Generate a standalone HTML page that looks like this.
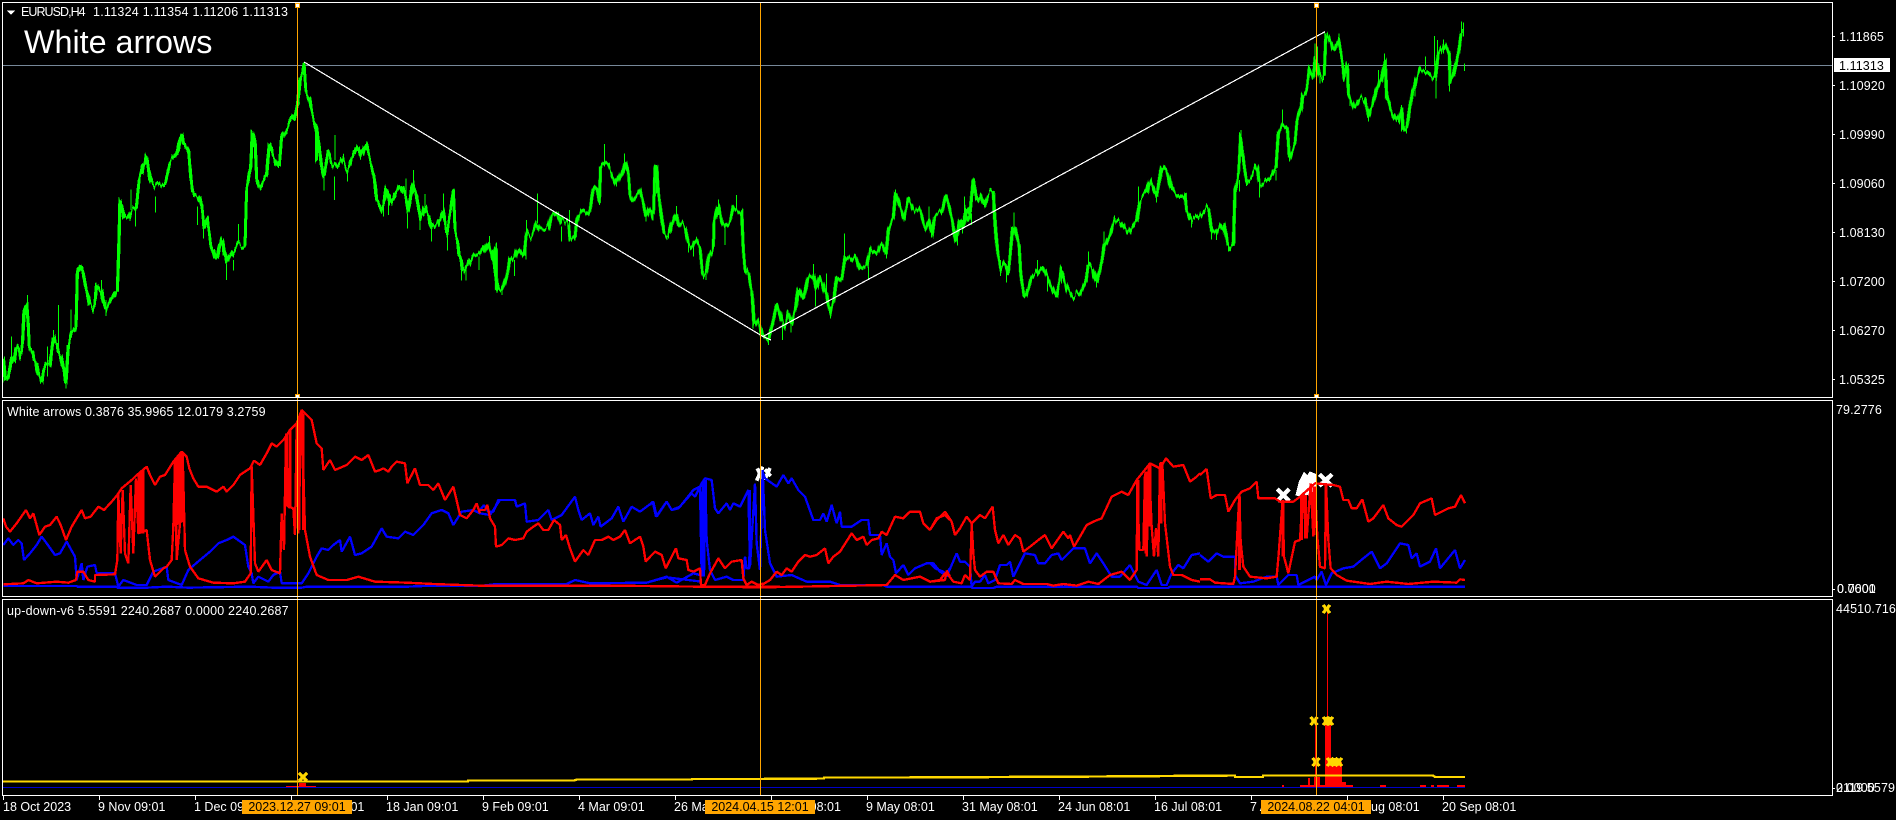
<!DOCTYPE html>
<html>
<head>
<meta charset="utf-8">
<title>EURUSD,H4</title>
<style>
html,body{margin:0;padding:0;background:#000;}
body{width:1896px;height:820px;position:relative;overflow:hidden;font-family:"Liberation Sans",sans-serif;font-size:12.5px;color:#fff;}
svg{position:absolute;left:0;top:0;}
.t{position:absolute;white-space:pre;line-height:14px;height:14px;}
.a{position:absolute;white-space:pre;line-height:14px;height:14px;left:1839px;letter-spacing:.1px;}
.big{position:absolute;left:24px;top:24px;font-size:32.3px;line-height:36px;white-space:pre;color:#fff;}
.o{position:absolute;background:#FFA500;color:#000;height:14px;line-height:14px;text-align:center;white-space:pre;}
.p{position:absolute;left:1834px;top:58px;width:56px;height:14px;background:#fff;}
</style>
</head>
<body>
<svg width="1896" height="820" viewBox="0 0 1896 820" xmlns="http://www.w3.org/2000/svg" shape-rendering="crispEdges">
<defs>
<filter id="jit" filterUnits="userSpaceOnUse" x="0" y="0" width="1896" height="820" color-interpolation-filters="sRGB">
<feTurbulence type="fractalNoise" baseFrequency="0.37 0.003" numOctaves="2" seed="7" result="m"/>
<feColorMatrix in="m" type="matrix" values="0 0 0 0 .5  0 1 0 0 0  0 0 0 0 0  0 0 0 0 1" result="map"/>
<feDisplacementMap in="SourceGraphic" in2="map" scale="15" xChannelSelector="R" yChannelSelector="G"/>
</filter>
</defs>
<!-- price line -->
<line x1="3" y1="65.5" x2="1832" y2="65.5" stroke="#778899" stroke-width="1"/>
<!-- green price -->
<g filter="url(#jit)">
<g fill="none" stroke="#00FF00" stroke-width="9.5" stroke-linejoin="bevel">
<g transform="translate(0,100) scale(.33333)">
<polyline points="10,770 16,840 25,830 35,770 42,790 48,750 55,735 62,770 68,720 72,640 80,610 84,660 88,750 95,750 105,780 118,830 125,845 135,795 150,795 160,710 172,740 178,760 188,790 197,850 205,740 213,700 228,685 232,520 245,495 258,560 268,610 282,630 290,560 305,580 315,630 340,590 352,570 357,420 360,290 372,350 385,355 395,330 408,330 418,240 428,210 440,165 450,235 462,260 480,250 495,250 510,190 530,170 545,100 552,130 566,150 572,230 580,280 595,285 605,310 612,380 622,350 632,430 650,480 665,410 680,490 690,470 715,430 735,440 740,270 752,210 757,100 765,120 770,240 778,265 800,225 808,130 825,180 838,200 845,110 860,90 870,65 888,40 895,0"/>
<polyline points="950,80 965,200 972,235 985,160 995,195 1005,200 1015,190 1025,175 1040,210 1050,190 1062,160 1075,135 1085,170 1098,135 1110,180 1122,220 1130,290 1148,330 1160,260 1172,310 1190,270 1200,255 1215,285 1225,340 1238,250 1250,290 1262,360 1275,320 1285,345 1295,385 1315,370 1330,330 1340,400 1360,280 1365,390 1378,460 1390,515 1405,490 1420,460 1440,465 1465,430 1480,470 1490,550 1497,570"/>
</g>
<g transform="translate(0,0) scale(.33333)">
<polyline points="885,345 893,300 900,240 912,195 918,280 930,300 935,330 945,370 950,380 950,480"/>
</g>
<g transform="translate(480,100) scale(.33333)">
<polyline points="0,455 10,460 25,425 38,470 48,440 50,570 65,570 80,530 90,470 100,480 115,445 132,470 140,400 155,410 172,370 178,385 205,385 215,340 230,330 245,370 265,365 270,410 285,410 290,355 305,330 328,345 340,270 350,260 358,300 362,190 385,200 410,250 430,205 435,180 445,210 450,280 460,295 480,270 490,310 498,350 510,320 520,350 525,210 530,200 535,270 540,320 552,400 565,410 580,360 590,340 595,370 615,385 625,430 635,440 645,420 660,445 668,520 678,525 688,465 700,450 702,370 716,320 725,370 735,380 750,370 760,325 785,335 790,450 795,510 805,520 815,570 823,680 835,660 842,690 850,710 865,720 878,670 890,610 905,660 915,680 925,640 935,670 948,620 955,565 970,600 985,530 1000,520 1010,570 1020,530 1040,590 1050,640 1062,600 1070,530 1085,540 1095,470 1110,480 1125,465 1140,510 1160,500 1172,450 1190,460 1205,430 1218,460 1225,385 1240,350 1247,275 1258,310 1272,350 1285,295 1300,325 1320,335 1335,385 1345,360 1355,405 1365,340 1385,345 1398,290 1415,350 1428,425 1440,360 1452,370 1460,320 1470,340 1480,240 1490,300 1500,290"/>
</g>
<g transform="translate(960,0) scale(.33333)">
<polyline points="0,670 10,685 15,640 28,660 40,540 48,590 60,590 70,620 85,580 100,570 103,640 108,710 113,760 122,810 135,790 145,820 158,680 165,690 177,740 182,820 192,890 200,880 215,830 230,820 245,800 262,830 275,860 290,890 305,810 320,860 340,890 360,880 378,840 385,790 395,800 410,850 425,790 432,740 450,705 465,660 480,665 505,700 530,660 540,600 560,580 570,540 590,590 605,495 620,510 635,570 650,590 675,580 680,630 695,660 715,650 745,620 755,690 770,700 790,670 805,745 820,730 825,570 835,530 842,410 850,470 860,540 875,530 892,500 898,550 930,530 948,500 955,400 968,375 982,385 988,470 1005,430 1012,360 1023,330 1028,285 1040,270 1048,205 1060,230 1065,170 1070,190 1080,230 1092,220 1098,100 1110,120 1120,150 1135,120 1148,190 1152,235 1162,190 1165,280 1185,320 1200,295 1215,300 1225,350 1240,310 1250,270 1265,235 1275,180 1280,290 1295,340 1315,370 1325,330 1330,395 1340,390 1355,290 1365,250 1380,210 1400,220 1425,240 1435,160 1455,130 1468,160 1470,250 1480,230 1495,160 1505,95"/>
</g>
</g>
</g>
<!-- thin spikes -->
<g fill="none" stroke="#00FF00" stroke-width="3.2">
<path transform="translate(0,100) scale(.33333)" d="M35 710V790M82 585V640M175 615V740M160 690V730M142 740V830M213 628V690M198 800V865M305 540V600M318 600V648M406 330V380M393 268V330M466 290V338M592 320V375M610 360V415M680 490V540M716 372V430M700 480V512M1005 105V180M1003 230V300M972 230V272M1043 210V245M1150 320V350M1165 300V345M1218 235V290M1222 340V385M1240 210V280M1260 360V390M1275 282V340M1295 380V425M1330 280V360M1343 400V452M1362 265V300M1385 510V542M1398 510V542M1437 470V510M1468 408V450M1490 428V500"/>
<path transform="translate(480,100) scale(.33333)" d="M172 280V370M140 360V400M245 380V425M268 330V425M285 385V422M358 290V315M374 132V200M410 240V260M433 160V200M104 480V528M138 440V478M48 430V570M66 560V585M498 340V365M519 310V362M530 195V280M565 395V415M590 318V360M735 380V435M716 298V345M770 285V330M640 440V470M625 430V458M678 500V540M865 700V735M908 670V720M933 660V698M1052 620V655M1007 550V620M1000 492V540M1040 520V590M1093 400V470M1165 500V540M1220 430V475M1247 268V290M1272 340V365M1355 390V412M1347 320V370M1432 400V437M1453 290V340M1481 235V280"/>
<path transform="translate(960,0) scale(.33333)" d="M8 660V700M35 640V675M13 590V640M162 637V690M122 780V828M140 810V848M232 780V830M263 820V875M305 800V850M385 755V810M410 830V862M432 695V750M535 560V620M590 580V608M695 650V682M755 690V718M770 695V720M805 730V755M825 680V730M838 540V575M843 390V470M860 520V558M898 540V593M948 510V542M968 328V375M988 440V485M1065 130V180M1072 140V200M1080 220V250M1090 200V240M1097 100V195M1137 100V140M1170 290V318M1225 330V365M1255 210V260M1274 160V230M1280 260V300M1325 315V395M1340 370V400M1365 240V290M1397 170V210M1423 108V200M1428 230V296M1433 120V160M1450 118V160M1468 210V275M1472 175V210M1505 65V100M1510 68V110M1513 190V213"/>
</g>
<!-- zigzag trend -->
<polyline points="304,62 763,336.5 771,340 763,336.5 1325,31.7" fill="none" stroke="#fff" stroke-width="1.2"/>

<!-- white X arrows -->
<g transform="translate(1200,440) scale(.33333)" stroke="#fff" stroke-width="13" fill="none">
<path d="M232 147L268 183M268 147L232 183"/>
<path d="M288 165L298 125L312 98L322 108L330 96L350 104L346 140L328 165L310 162L300 168Z" fill="#fff" stroke-width="3"/>
<path d="M358 103L396 138M396 103L358 138"/>
</g>
<g transform="translate(650,440) scale(.33333)" stroke="#fff" stroke-width="11" fill="none">
<path d="M320 122L338 80M322 85L340 122M345 118L360 84M345 88L362 108"/>
</g>

<!-- indicator panel lines -->
<g fill="none" stroke="#0000FF" stroke-width="7" stroke-linejoin="bevel">
<g transform="translate(0,390) scale(.33333)">
<polyline points="10,465 25,445 40,465 55,450 65,460 72,510 90,490 110,465 125,440 140,460 165,495 180,490 200,455 225,500 230,570 245,520 250,570 262,530 285,525 290,550 345,550 355,590 370,570 410,585 440,585 460,545 500,530 505,570 545,585 565,540 600,510 630,485 655,460 680,450 700,440 735,465 745,530 755,550 760,580 775,560 805,575 820,555 840,545 845,580 890,580 905,580 925,550 950,500 965,475 985,480 1000,465 1020,450 1025,485 1050,440 1065,495 1085,490 1115,470 1145,415 1160,440 1195,445 1215,425 1240,435 1270,405 1295,370 1325,360 1345,370 1360,405 1385,365 1420,360 1440,370 1470,375 1500,330"/>
<polyline points="10,588 230,588 232,590 350,590 352,593 440,593 500,590 565,593 750,590 820,593 905,593 920,590 1220,590 1300,587 1440,587"/>
</g>
<g transform="translate(480,440) scale(.33333)">
<polyline points="0,210 12,195 25,215 40,215 55,180 105,180 110,200 135,190 140,245 175,240 205,210 215,240 245,225 285,170 295,210 305,240 330,220 340,255 355,230 362,260 395,235 415,200 430,245 455,200 480,215 520,185 530,230 560,185 575,210 600,200 640,150 660,140 665,410 668,125 672,410 676,120 680,300 690,390 705,420 740,410 760,420 790,420 795,350 800,385 808,385 810,150"/>
<polyline points="0,438 50,432 260,432 285,420 330,430 500,428 560,410 590,428 640,400 660,405"/>
</g>
<g stroke-width="11" transform="translate(480,440) scale(.33333)"><path d="M670 125V400M676 120V300"/></g>
<g transform="translate(650,440) scale(.33333)">
<polyline points="0,195 8,185 18,230 50,185 65,210 85,205 125,160 135,170 155,130 165,115 185,120 195,205 205,220 230,190 240,210 250,190 270,200 295,150 300,380 315,130 320,310 330,390 338,90 345,270 360,370 380,410 425,405 470,425 540,425 570,435 700,435 710,440 900,440"/>
<polyline points="340,100 345,115 380,140 400,105 415,130 425,115 445,150 465,170 490,240 510,240 520,220 530,245 545,195 560,250 570,215 575,260 605,260 635,240 655,240 660,285 690,285 695,345 710,310 720,350 730,360 738,400 760,375 775,405 795,385 830,370 850,370 870,395 885,405 900,385"/>
<polyline points="155,425 50,412 0,425"/>
</g>
<g transform="translate(930,440) scale(.33333)">
<polyline points="0,370 15,385 40,395 50,410 80,340 90,365 105,365 120,380 125,440 135,425 150,425 165,405 175,430 195,420 210,375 230,375 240,365 250,410 285,340 315,345 325,370 345,370 365,345 385,340 395,360 415,340 430,325 465,325 480,370 500,340 520,370 545,410 570,410 600,375 625,425 650,435 680,390 695,435 710,435 725,400 745,375 760,385 785,345 810,340"/>
<polyline points="0,440 125,440 125,444 190,444 200,440 620,440 625,444 715,444 720,440 810,440"/>
</g>
<g transform="translate(1200,440) scale(.33333)">
<polyline points="0,345 25,365 50,340 70,350 105,350 105,405 120,430 160,425 200,410 230,410 235,435 250,420 265,405 290,405 295,435 345,410 350,420 365,395 378,435 395,400 430,385 460,380 490,355 515,335 540,385 560,370 600,310 625,315 635,355 650,340 660,380 690,365 708,325 720,385 765,330 780,385 795,360"/>
<polyline points="0,440 795,440"/>
</g>
</g>
<g fill="none" stroke="#FF0000" stroke-width="7" stroke-linejoin="bevel">
<g transform="translate(0,390) scale(.33333)">
<polyline points="10,385 18,410 30,425 50,400 78,360 90,385 100,370 118,435 135,410 150,405 170,380 182,405 198,450 215,410 230,385 245,360 255,385 272,380 295,350 312,360 335,335 352,315 365,295 395,270 405,260 440,230 450,255 465,285 480,260 495,255 520,215 545,185 560,200 568,235 580,265 595,290 620,290 650,305 670,290 680,305 700,285 720,255 750,235 762,212 780,225 800,190 815,160 830,170 850,150 870,120 890,100 905,60 920,75 935,90 950,160 965,175 970,240 990,210 1005,240 1040,225 1065,200 1085,210 1105,195 1125,245 1140,240 1150,235 1165,245 1175,230 1190,215 1215,220 1222,280 1245,235 1260,285 1285,285 1300,300 1315,280 1335,330 1360,290 1372,340 1380,375 1400,385 1420,360 1430,340 1440,370"/>
<polyline points="10,583 70,580 85,570 110,580 170,575 205,578 228,570 232,545 250,545 265,570 285,575 285,555 345,553 352,510 355,310 362,490 368,300 375,490 385,520 392,285 400,490 408,265 415,430 440,420 450,510 465,560 490,535 500,530 515,510 520,410 525,210 530,510 540,400 548,190 555,480 570,530 595,565 640,578 700,580 735,575 752,550 755,230 765,520 775,545 800,510 815,540 840,550 845,370 852,480 858,130 865,350 880,355 885,435 890,100 895,430 905,60 915,420 930,500 950,555 985,570 1040,570 1075,560 1125,575 1220,578 1300,582 1440,587"/>
<path d="M413 255L432 238V430H413ZM522 212L548 188V395L522 410Z" fill="#FF0000" stroke-width="2"/>
<path d="M860 130V350M870 118V355M898 80V420M910 70V420" stroke-width="8"/>
</g>
<g transform="translate(480,440) scale(.33333)">
<polyline points="0,210 15,210 22,195 30,235 45,260 48,320 65,315 85,295 105,300 130,295 140,275 160,260 175,250 190,270 205,270 222,240 240,255 245,300 258,285 270,325 285,365 310,330 325,345 345,300 365,300 385,290 400,300 420,290 435,270 450,310 465,300 480,290 490,320 497,365 515,345 525,335 545,345 557,385 575,350 588,325 595,355 620,360 625,390 640,395 660,385 663,435 675,435 690,400 715,355 735,385 755,365 785,360 790,415 800,435 815,425 835,435 850,430"/>
<polyline points="0,437 400,437 660,440 900,440"/>
</g>
<g transform="translate(650,440) scale(.33333)">
<polyline points="335,435 360,420 380,395 395,405 410,385 425,395 445,365 465,345 480,350 500,345 525,325 535,370 550,350 570,335 605,280 620,300 640,290 650,315 665,300 685,295 695,275 710,285 735,230 760,235 780,215 810,215 820,250 840,270 860,235 885,225 900,240"/>
<polyline points="170,440 340,442 660,436 710,435 735,405 760,420 810,410 840,425 885,420 890,392 900,410"/>
</g>
<g transform="translate(930,440) scale(.33333)">
<polyline points="0,270 20,240 45,215 65,245 75,285 90,265 110,230 125,250 150,225 165,235 188,200 195,270 205,310 220,285 235,315 255,285 270,295 280,335 300,320 325,300 345,285 365,325 400,275 415,295 420,285 432,320 450,290 470,255 490,245 515,235 545,170 575,155 595,165 620,120 660,70 690,85 708,55 730,80 760,75 780,125 800,110 810,100"/>
<polyline points="0,425 30,420 45,400 55,405 70,425 95,430 105,405 120,420 125,250 130,340 135,390 150,410 170,395 190,395 205,430 245,432 255,420 280,432 350,432 370,437 400,432 440,437 475,425 505,432 540,405 575,395 600,420 620,390 622,120 628,330 640,330 645,100 650,350 657,70 665,260 672,350 678,265 685,350 690,70 697,70 705,250 720,380 730,405 755,405 785,420 810,425"/>
<path d="M625 120V330M648 95V340M660 70V260M694 70V250" stroke-width="8"/>
</g>
<g transform="translate(1200,440) scale(.33333)">
<polyline points="0,105 20,87 32,175 50,165 75,165 85,215 105,180 125,155 150,145 170,125 175,175 225,175 240,185 280,185 300,170 345,130 400,135 420,140 430,180 445,180 455,205 470,205 487,178 505,245 520,235 550,195 565,235 590,255 605,260 640,225 660,190 695,175 705,225 745,205 765,200 783,165 795,190"/>
<polyline points="0,418 30,418 45,428 100,432 105,410 118,165 122,305 130,380 150,410 200,415 230,410 235,355 248,180 252,350 265,400 285,305 300,300 308,160 320,295 332,130 340,290 345,140 352,290 360,380 375,385 378,130 385,300 392,385 410,405 440,422 510,432 560,425 625,432 700,425 770,428 780,418 795,420"/>
<path d="M119 170V390M249 185V350M305 165V300M316 165V295M342 140V285M378 135V290" stroke-width="9"/>
</g>
</g>

<!-- third panel -->
<g fill="none" stroke="#FF0000">
<path d="M1327.5 609V725M1315.5 721V787" stroke-width="1"/>
</g>
<g fill="#FF0000">
<rect x="1325" y="725" width="6" height="62"/>
<rect x="1325" y="762" width="17" height="23"/>
<rect x="1300" y="785" width="53" height="2"/>
<rect x="1308" y="778" width="2" height="9"/>
<rect x="1314" y="777" width="6" height="10"/>
<rect x="1342" y="782" width="4" height="5"/>
<rect x="1282" y="785" width="2" height="2"/>
<rect x="1380" y="785" width="6" height="2"/>
<rect x="1420" y="785" width="6" height="2"/>
<rect x="1431" y="785" width="3" height="2"/>
<rect x="1437" y="785" width="12" height="2"/>
<rect x="1457" y="785" width="8" height="2"/>
<rect x="299" y="783" width="7" height="4"/>
<rect x="286" y="786" width="30" height="1"/>
</g>
<line x1="3" y1="787.5" x2="1465" y2="787.5" stroke="#0000C8" stroke-width="1"/>
<polyline points="3,781.5 468,781.5 468,780.5 574,780.5 577,779.5 692,779.5 692,779 758,779 824,778.5 824,777.5 900,777.5 1100,776.5 1235,775.5 1235,777 1263,777 1263,775.5 1433,775.5 1435,777 1465,777" fill="none" stroke="#FFD700" stroke-width="2.4"/>
<g stroke="#FFD700" stroke-width="3.2" fill="none">
<path d="M299 773L307 781M307 773L299 781"/>
<path d="M1323 605L1330 613M1330 605L1323 613"/>
<path d="M1310.5 717L1317.5 725M1317.5 717L1310.5 725"/>
<path d="M1323 717L1330 725M1330 717L1323 725M1326 717L1333 725M1333 717L1326 725"/>
<path d="M1312.5 758L1319.5 766M1319.5 758L1312.5 766"/>
<path d="M1327 758L1334 766M1334 758L1327 766M1331 758L1338 766M1338 758L1331 766M1335 758L1342 766M1342 758L1335 766"/>
</g>

<!-- vertical orange lines -->
<g stroke="#FFA500" stroke-width="1">
<line x1="297.5" y1="3" x2="297.5" y2="796"/>
<line x1="760.5" y1="3" x2="760.5" y2="796"/>
<line x1="1316.5" y1="3" x2="1316.5" y2="796"/>
</g>
<g fill="#fff" stroke="#FFA500" stroke-width="1">
<rect x="295.5" y="3.5" width="4" height="4"/>
<rect x="295.5" y="394.5" width="4" height="3"/>
<rect x="1314.5" y="3.5" width="4" height="4"/>
<rect x="1314.5" y="394.5" width="4" height="3"/>
</g>

<!-- frames -->
<g fill="none" stroke="#fff" stroke-width="1">
<rect x="2.5" y="2.5" width="1830" height="395"/>
<rect x="2.5" y="400.5" width="1830" height="196"/>
<rect x="2.5" y="599.5" width="1830" height="196"/>
</g>
<path d="M7 10.5H15L11 15Z" fill="#fff"/>
<!-- ticks -->
<g stroke="#fff" stroke-width="1">
<path d="M1833 36.5H1835M1833 85.5H1835M1833 134.5H1835M1833 183.5H1835M1833 232.5H1835M1833 281.5H1835M1833 330.5H1835M1833 379.5H1835M1833 589.5H1835M1833 788.5H1835"/>
<path d="M3.5 796V800M99.5 796V800M195.5 796V800M291.5 796V800M387.5 796V800M483.5 796V800M579.5 796V800M675.5 796V800M771.5 796V800M867.5 796V800M963.5 796V800M1059.5 796V800M1155.5 796V800M1251.5 796V800M1347.5 796V800M1443.5 796V800"/>
</g>
</svg>

<div class="t" style="left:21px;top:5px;letter-spacing:-.95px;">EURUSD,H4</div>
<div class="t" style="left:93px;top:5px;letter-spacing:.25px;">1.11324 1.11354 1.11206 1.11313</div>
<div class="big">White arrows</div>
<div class="t" style="left:7px;top:405px;letter-spacing:.12px;">White arrows 0.3876 35.9965 12.0179 3.2759</div>
<div class="t" style="left:7px;top:604px;letter-spacing:.18px;">up-down-v6 5.5591 2240.2687 0.0000 2240.2687</div>

<div class="a" style="top:30px;">1.11865</div>
<div class="a" style="top:79px;">1.10920</div>
<div class="a" style="top:128px;">1.09990</div>
<div class="a" style="top:177px;">1.09060</div>
<div class="a" style="top:226px;">1.08130</div>
<div class="a" style="top:275px;">1.07200</div>
<div class="a" style="top:324px;">1.06270</div>
<div class="a" style="top:373px;">1.05325</div>
<div class="p"></div>
<div class="a" style="top:59px;color:#000;">1.11313</div>
<div class="a" style="top:403px;left:1836px;">79.2776</div>
<div class="a" style="top:582px;left:1837px;">0.7601</div>
<div class="a" style="top:582px;left:1837px;">0.0000</div>
<div class="a" style="top:602px;left:1836px;">44510.7164</div>
<div class="a" style="top:781px;left:1836px;">0.0000</div>
<div class="a" style="top:781px;left:1836px;">2119.5579</div>

<div class="t" style="left:3px;top:800px;">18 Oct 2023</div>
<div class="t" style="left:98px;top:800px;">9 Nov 09:01</div>
<div class="t" style="left:194px;top:800px;">1 Dec 09:01</div>
<div class="t" style="left:290px;top:800px;">22 Dec 09:01</div>
<div class="t" style="left:386px;top:800px;">18 Jan 09:01</div>
<div class="t" style="left:482px;top:800px;">9 Feb 09:01</div>
<div class="t" style="left:578px;top:800px;">4 Mar 09:01</div>
<div class="t" style="left:674px;top:800px;">26 Mar 08:01</div>
<div class="t" style="left:770px;top:800px;">17 Apr 08:01</div>
<div class="t" style="left:866px;top:800px;">9 May 08:01</div>
<div class="t" style="left:962px;top:800px;">31 May 08:01</div>
<div class="t" style="left:1058px;top:800px;">24 Jun 08:01</div>
<div class="t" style="left:1154px;top:800px;">16 Jul 08:01</div>
<div class="t" style="left:1250px;top:800px;">7 Aug 08:01</div>
<div class="t" style="left:1346px;top:800px;">29 Aug 08:01</div>
<div class="t" style="left:1442px;top:800px;">20 Sep 08:01</div>

<div class="o" style="left:242px;top:800px;width:110px;">2023.12.27 09:01</div>
<div class="o" style="left:705px;top:800px;width:110px;">2024.04.15 12:01</div>
<div class="o" style="left:1261px;top:800px;width:110px;">2024.08.22 04:01</div>
</body>
</html>
